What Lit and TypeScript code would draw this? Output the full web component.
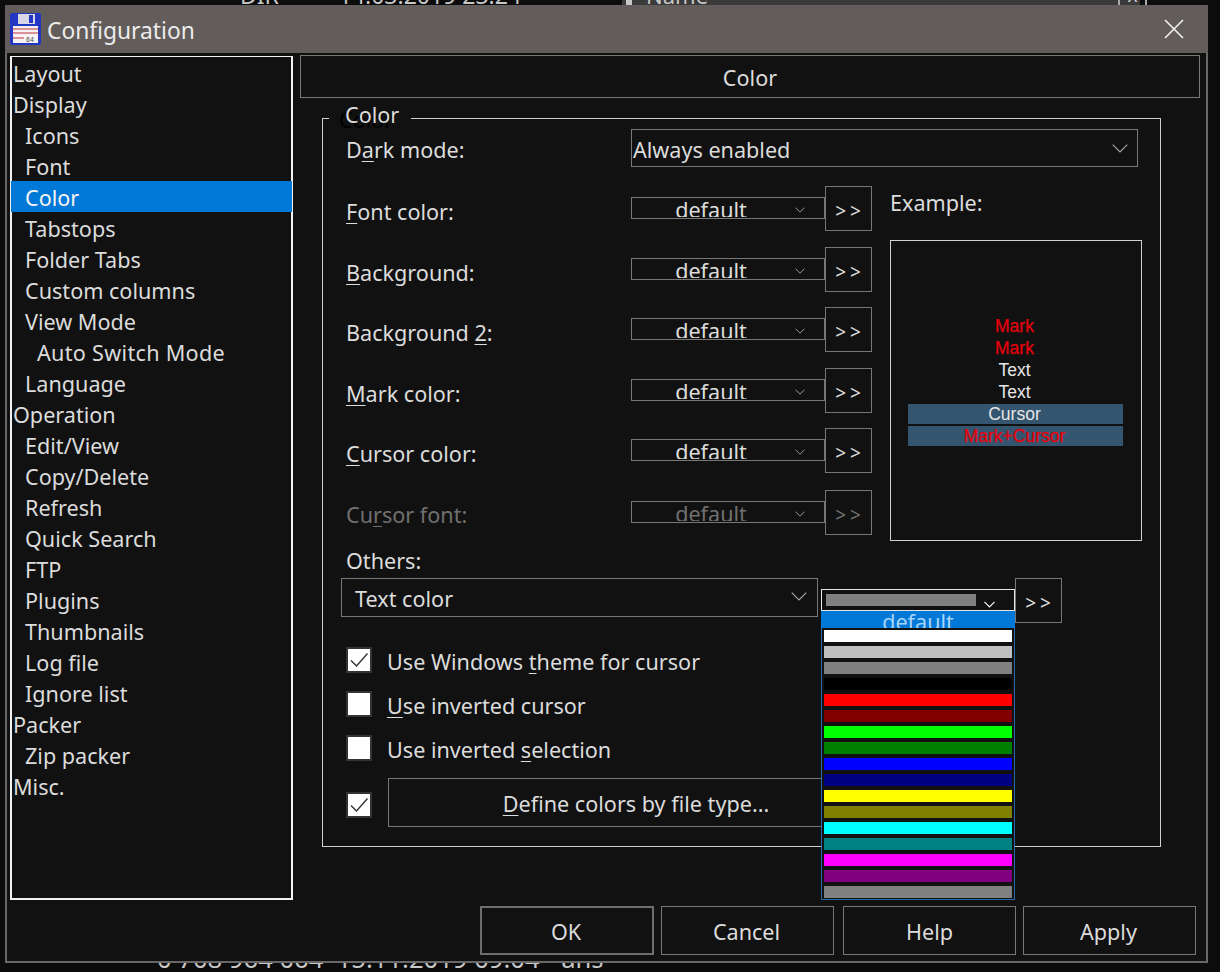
import { LitElement, html, css, svg } from "lit";
import { customElement } from "lit/decorators.js";

const TREE: [string, number][] = [
  ["Layout", 0], ["Display", 0], ["Icons", 1], ["Font", 1], ["Color", 1], ["Tabstops", 1],
  ["Folder Tabs", 1], ["Custom columns", 1], ["View Mode", 1], ["Auto Switch Mode", 2], ["Language", 1],
  ["Operation", 0], ["Edit/View", 1], ["Copy/Delete", 1], ["Refresh", 1], ["Quick Search", 1], ["FTP", 1],
  ["Plugins", 1], ["Thumbnails", 1], ["Log file", 1], ["Ignore list", 1], ["Packer", 0], ["Zip packer", 1], ["Misc.", 0],
];
const SWATCHES = ["#ffffff", "#c0c0c0", "#808080", "#000000", "#ff0000", "#800000", "#00ff00", "#008000",
  "#0000ff", "#000080", "#ffff00", "#808000", "#00ffff", "#008080", "#ff00ff", "#800080", "#808080"];

const chev = (w: number, h: number, cls = "") => html`<svg class=${cls} width=${w} height=${h} viewBox="0 0 16 9" fill="none" stroke="currentColor" stroke-width=${w > 12 ? 1.1 : 1.6}>${svg`<path d="M.7.7 8 8 15.3.7"/>`}</svg>`;

@customElement("app-root")
export class AppRoot extends LitElement {
  static styles = css`
    :host { display: block; width: 1220px; height: 972px; background: #0c0c0c; position: relative; overflow: hidden;
      font-family: "Noto Sans", "Open Sans", sans-serif; font-size: 21.6px; color: #dcdcdc; }
    * { box-sizing: border-box; }
    u { text-decoration-thickness: 1px; text-underline-offset: 3px; }
    .behind { position: absolute; white-space: pre; color: #c8c8c8; font-size: 23px; line-height: 24px; }
    .b-top { left: 240px; top: -17px; }
    .b-bar { position: absolute; left: 622px; top: 0; width: 518px; height: 6px; background: #3a3a3a; overflow: hidden; }
    .b-bar span { position: absolute; left: 24px; top: -17px; font-size: 22px; line-height: 24px; color: #c8c8c8; }
    .b-bar i { position: absolute; left: 4px; top: 0; width: 6px; height: 6px; background: #c8c8c8; }
    .b-x { position: absolute; left: 1118px; top: 0; width: 29px; height: 6px; border: solid #aaa; border-width: 0 2px; overflow: hidden; color: #c8c8c8; font-size: 20px; line-height: 20px; }
    .b-x span { display: block; margin-top: -15px; text-align: center; }
    .b-bot { left: 157px; top: 947px; font-size: 25.6px; }
    .dialog { position: absolute; left: 5px; top: 5px; width: 1203px; height: 958px; background: #111111;
      border: 2px solid #6a6866; border-top: 0; display: flex; flex-direction: column; }
    .title { height: 48px; margin: 0 -2px; background: #625d5a; display: flex; align-items: center; padding: 0 0 0 5px; flex: none;
      color: #ececec; font-size: 22.8px; }
    .title svg.logo { margin-right: 6px; flex: none; }
    .title .txt { flex: 1; padding-top: 2px; }
    .close { margin-right: 24px; flex: none; }
    .main { flex: 1; display: flex; padding: 3px 0 0 3px; position: relative; }
    .tree { width: 283px; height: 844px; border: 2px solid #f2f2f2; border-top-width: 1.5px; padding-top: 0; flex: none; }
    .node { height: 31px; line-height: 33px; padding-left: 2px; white-space: nowrap; margin: 0 -1px; }
    .node.l1 { padding-left: 14px; }
    .node.l2 { padding-left: 26px; letter-spacing: .3px; }
    .node.sel { background: #0078d7; color: #f4f4f4; }
    .right { margin-left: 7px; width: 900px; flex: none; margin-top: -1px; display: flex; flex-direction: column; }
    .head { height: 43px; border: 1px solid #777; display: flex; align-items: center; justify-content: center; padding-top: 1px; }
    .group { margin: 20px 0 0 22px; width: 839px; height: 729px; border: 1px solid #d0d0d0; position: relative; padding: 10px 0 0 0; }
    .legend { position: absolute; left: 6px; top: -18px; height: 28px; line-height: 28px; padding: 0 12px 0 16px; background: #111; text-shadow: -6px 5px 0 #000; }
    .dark { display: flex; align-items: center; height: 38px; padding-left: 23px; position: relative; }
    .lab { display: block; width: 284px; flex: none; }
    .dark .lab { padding-top: 2px; width: 285px; }
    .combo { border: 1px solid #777; display: flex; align-items: center; position: relative; color: #dcdcdc; }
    .combo.big { height: 38px; }
    .combo svg { color: #aaa; position: absolute; }
    .dark .combo { width: 507px; margin-left: 0; padding-left: 1px; padding-top: 2px; }
    .dark .combo svg { right: 9px; top: 14px; }
    .rows { display: flex; height: 355px; margin-top: 19px; padding-left: 23px; }
    .col { display: grid; grid-template-rows: repeat(6, 45px); row-gap: 15.6px; width: 526px; flex: none; }
    .row { display: flex; align-items: flex-start; }
    .row .lab { line-height: 22px; padding-top: 15px; width: 285px; }
    .row.off { margin-top: 1px; }
    .row.off .lab { padding-top: 14px; }
    .combo.small { width: 194px; height: 22px; margin-top: 11px; overflow: hidden; }
    .combo.small span { display: block; width: 158px; text-align: center; line-height: 24px; height: 19px; overflow: hidden; align-self: flex-start; }
    .combo.small svg { right: 19px; top: 9px; color: #999; }
    .btn { border: 1px solid #777; display: flex; align-items: center; justify-content: center; color: #dcdcdc; flex: none; padding-top: 2px; }
    .more { width: 47px; height: 45px; font-size: 19px; letter-spacing: 4px; padding: 5px 0 0 3px; }
    .off, .off .combo, .off .btn { color: #707070; }
    .ex { margin-left: 18px; width: 252px; display: flex; flex-direction: column; }
    .ex-lab { height: 54px; line-height: 34px; }
    .preview { height: 301px; border: 1px solid #d0d0d0; padding: 74px 18px 0 17px; font-family: "Liberation Sans", Arial, sans-serif; font-size: 17.5px;
      display: flex; flex-direction: column; text-align: center; line-height: 22px; color: #e6e6e6; }
    .preview div { height: 22px; padding-right: 2px; }
    .preview .last { margin-bottom: 1px; }
    .mark { color: #e8000c; -webkit-text-stroke: .25px #e8000c; }
    .preview .cur { background: #34556f; height: 20px; line-height: 20px; margin-bottom: 2px; }
    .others { margin: 8px 0 0 23px; height: 29px; line-height: 24px; }
    .orow { display: flex; margin-left: 18px; height: 45px; align-items: flex-start; position: relative; }
    .combo.text { width: 477px; height: 39px; padding: 2px 0 0 13px; }
    .combo.text svg { right: 10px; top: 13px; }
    .combo.pick { width: 194px; height: 22px; margin: 11px 0 0 3px; border-color: #e6e6e6; }
    .combo.pick i { display: block; position: absolute; left: 4px; top: 4px; width: 150px; height: 12px; background: #808080; }
    .combo.pick svg { right: 19px; top: 11px; color: #fff; }
    .pop { position: absolute; left: 480px; top: 33px; width: 194px; height: 289px; border: 1px solid #2a6aa5; border-top: 0; background: #111; z-index: 2; }
    .pop .def { margin: 0 -1px; background: #0078d7; color: #a6d4f7; text-align: center; overflow: hidden; line-height: 22px; height: 17px; }
    .sw { display: flex; flex-direction: column; gap: 4px; padding: 2px 2px 0 2px; }
    .sw i { display: block; height: 12px; }
    .checks { margin: 24px 0 0 23px; display: flex; flex-direction: column; gap: 18px; }
    .chk { display: flex; align-items: center; height: 26px; }
    .chk > span:last-child { padding-top: 2px; }
    .box { width: 26px; height: 26px; background: #fff; border: 2px solid #333; flex: none; margin-right: 15px; display: flex; align-items: center; justify-content: center; }
    .define { display: flex; align-items: center; margin: 17px 0 0 23px; height: 49px; }
    .define .box { margin: 5px 16px 0 0; }
    .define .btn { width: 496px; height: 49px; }
    .foot { position: absolute; left: 473px; top: 853px; display: flex; }
    .act { width: 173px; height: 49px; }
    .act.ok { border: 2px solid #6e6e6e; width: 174px; padding-right: 2px; }
    .foot .cancel { margin-left: 7px; padding-right: 2px; }
    .foot .help { margin-left: 9px; }
    .foot .apply { margin-left: 7px; padding-right: 2px; }
  `;

  private renderRow(label: unknown, off = false) {
    return html`<div class="row ${off ? "off" : ""}">
      <span class="lab">${label}</span>
      <div class="combo small"><span>default</span>${chev(10, 6)}</div>
      <div class="btn more">&gt;&gt;</div>
    </div>`;
  }

  render() {
    const check = html`<svg width="22" height="22" viewBox="0 0 22 22" fill="none" stroke="#333" stroke-width="1.4"><path d="M3 11.5 8.5 17 19.5 4.5"/></svg>`;
    return html`
      <div class="behind b-top">DIR          14.03.2019 23:24</div>
      <div class="b-bar"><i></i><span>Name</span></div>
      <div class="b-x"><span>x</span></div>
      <div class="behind b-bot">0 708 964 064  15.11.2019 09:04  -ans</div>
      <div class="dialog">
        <div class="title">
          <svg class="logo" width="31" height="32" viewBox="0 0 31 32">
            <rect x="0" y="0" width="31" height="32" rx="2" fill="#2436c4"/>
            <rect x="8" y="1" width="17" height="10" fill="#d6d6e4"/>
            <rect x="19" y="2" width="4" height="8" fill="#2436c4"/>
            <rect x="3" y="13" width="25" height="17" fill="#f4f2f2"/>
            <path d="M3 16h25M3 20h25M3 25h11" stroke="#c23040" stroke-width="1.2"/>
            <text x="16" y="29" font-size="6.5" font-family="Liberation Mono" fill="#444">64</text>
          </svg>
          <span class="txt">Configuration</span>
          <svg class="close" width="20" height="20" viewBox="0 0 20 20" stroke="#f2f2f2" stroke-width="1.6"><path d="M1 1 19 19M19 1 1 19"/></svg>
        </div>
        <div class="main">
          <div class="tree">
            ${TREE.map(([t, l]) => html`<div class="node l${l} ${t === "Color" ? "sel" : ""}">${t}</div>`)}
          </div>
          <div class="right">
            <div class="head">Color</div>
            <div class="group">
              <div class="legend">Color</div>
              <div class="dark">
                <span class="lab">D<u>a</u>rk mode:</span>
                <div class="combo big">Always enabled${chev(16, 9)}</div>
              </div>
              <div class="rows">
                <div class="col">
                  ${this.renderRow(html`<u>F</u>ont color:`)}
                  ${this.renderRow(html`<u>B</u>ackground:`)}
                  ${this.renderRow(html`Background <u>2</u>:`)}
                  ${this.renderRow(html`<u>M</u>ark color:`)}
                  ${this.renderRow(html`<u>C</u>ursor color:`)}
                  ${this.renderRow(html`Cu<u>r</u>sor font:`, true)}
                </div>
                <div class="ex">
                  <div class="ex-lab">Example:</div>
                  <div class="preview">
                    <div class="mark">Mark</div>
                    <div class="mark">Mark</div>
                    <div>Text</div>
                    <div class="last">Text</div>
                    <div class="cur">Cursor</div>
                    <div class="cur mark">Mark+Cursor</div>
                  </div>
                </div>
              </div>
              <div class="others">Others:</div>
              <div class="orow">
                <div class="combo text">Text color${chev(16, 9)}</div>
                <div class="combo pick"><i></i>${chev(11, 7)}</div>
                <div class="btn more">&gt;&gt;</div>
                <div class="pop">
                  <div class="def">default</div>
                  <div class="sw">${SWATCHES.map((c) => html`<i style="background:${c}"></i>`)}</div>
                </div>
              </div>
              <div class="checks">
                <div class="chk"><span class="box">${check}</span><span>Use Windows <u>t</u>heme for cursor</span></div>
                <div class="chk"><span class="box"></span><span><u>U</u>se inverted cursor</span></div>
                <div class="chk"><span class="box"></span><span>Use inverted <u>s</u>election</span></div>
              </div>
              <div class="define">
                <span class="box">${check}</span>
                <div class="btn"><span><u>D</u>efine colors by file type...</span></div>
              </div>
            </div>
          </div>
          <div class="foot">
            <div class="btn act ok">OK</div>
            <div class="btn act cancel">Cancel</div>
            <div class="btn act help">Help</div>
            <div class="btn act apply">Apply</div>
          </div>
        </div>
      </div>
    `;
  }
}
